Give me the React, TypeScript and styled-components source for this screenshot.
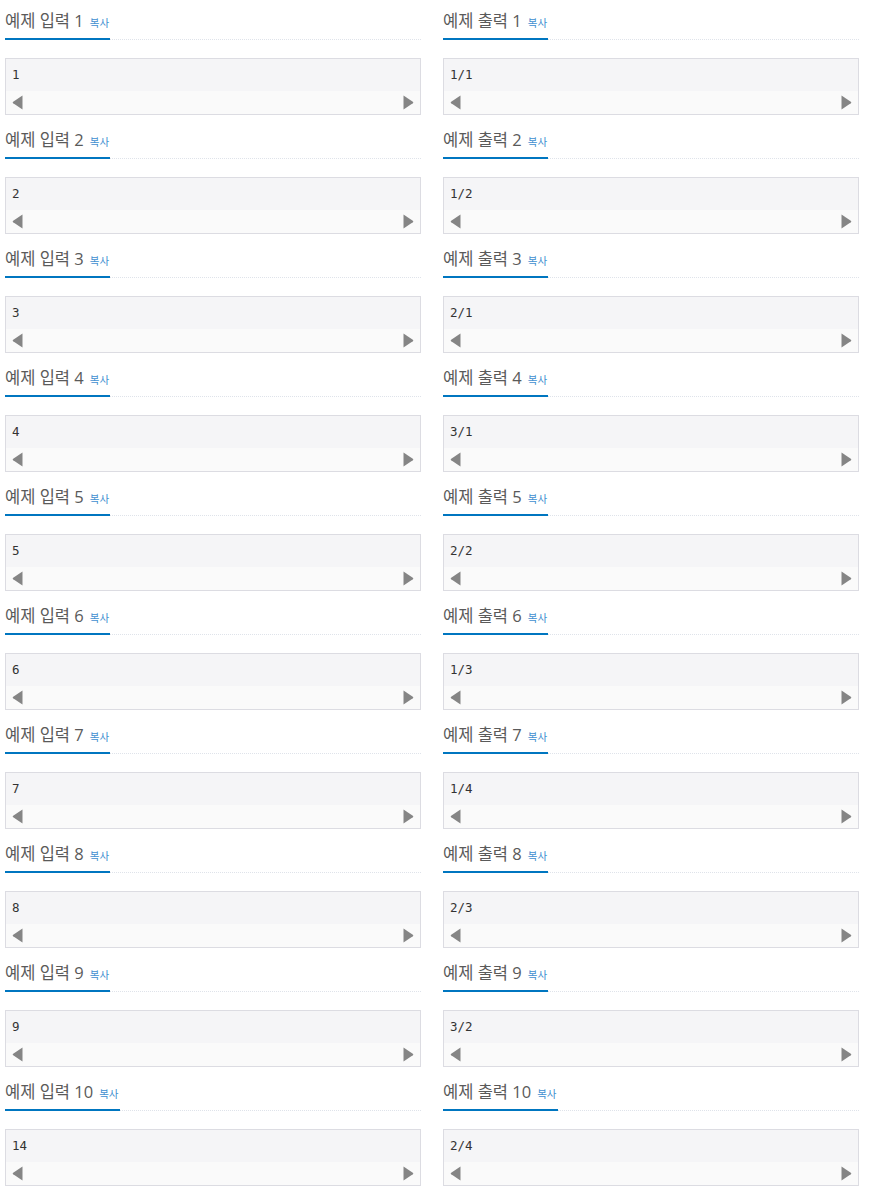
import React from "react";
import styled, { createGlobalStyle } from "styled-components";

const Global = createGlobalStyle`
  html, body { margin: 0; padding: 0; background: #ffffff; }
  body { font-family: "Open Sans", "Noto Sans CJK KR", sans-serif; }
`;

const Page = styled.div`
  display: grid;
  grid-template-columns: 416px 416px;
  column-gap: 22px;
  padding-left: 5px;
  width: 870px;
  box-sizing: border-box;
`;

const Section = styled.section`
  display: flex;
  flex-direction: column;
  padding-bottom: 4px;
`;

const Headline = styled.div`
  border-bottom: 1px dotted #dfe3ea;
  height: 40px;
  box-sizing: border-box;
  display: flex;
  align-items: flex-end;
`;

const Title = styled.h2`
  margin: 0 0 -1px 0;
  padding: 0 1px 4px 0;
  border-bottom: 2px solid #0076c0;
  font-size: 16.5px;
  line-height: 22px;
  font-weight: 400;
  color: #5a5a5a;
  font-family: "Open Sans", "Noto Sans CJK KR", sans-serif;
  display: flex;
  align-items: baseline;
  gap: 6px;
`;

const Copy = styled.span`
  font-size: 10.5px;
  color: #3f8fd0;
  font-family: "Open Sans", "Noto Sans CJK KR", sans-serif;
`;

const Box = styled.div`
  margin-top: 18px;
  border: 1px solid #dcdce2;
  display: flex;
  flex-direction: column;
`;

const Data = styled.pre`
  margin: 0;
  height: 32px;
  padding: 0 6px;
  background: #f5f5f7;
  font-family: "DejaVu Sans Mono", "Liberation Mono", monospace;
  font-size: 12.5px;
  line-height: 32px;
  color: #333333;
`;

const Scrollbar = styled.div`
  height: 23px;
  background: #fafafa;
  display: flex;
  align-items: center;
  justify-content: space-between;
  padding: 0 6px;
`;

const Arrow = ({ dir }: { dir: "left" | "right" }) => (
  <svg width="11" height="15" viewBox="0 0 11 15">
    {dir === "left" ? (
      <path d="M10.5 0.5 L10.5 14.5 L1.2 8.3 Q0 7.5 1.2 6.7 Z" fill="#858585" />
    ) : (
      <path d="M0.5 0.5 L0.5 14.5 L9.8 8.3 Q11 7.5 9.8 6.7 Z" fill="#858585" />
    )}
  </svg>
);

const inputs = ["1", "2", "3", "4", "5", "6", "7", "8", "9", "14"];
const outputs = ["1/1", "1/2", "2/1", "3/1", "2/2", "1/3", "1/4", "2/3", "3/2", "2/4"];

const Sample = ({ label, value }: { label: string; value: string }) => (
  <Section>
    <Headline>
      <Title>
        {label}
        <Copy>복사</Copy>
      </Title>
    </Headline>
    <Box>
      <Data>{value}</Data>
      <Scrollbar>
        <Arrow dir="left" />
        <Arrow dir="right" />
      </Scrollbar>
    </Box>
  </Section>
);

export default function App() {
  return (
    <>
      <Global />
      <Page>
        {inputs.map((v, i) => (
          <React.Fragment key={i}>
            <Sample label={`예제 입력 ${i + 1}`} value={v} />
            <Sample label={`예제 출력 ${i + 1}`} value={outputs[i]} />
          </React.Fragment>
        ))}
      </Page>
    </>
  );
}
